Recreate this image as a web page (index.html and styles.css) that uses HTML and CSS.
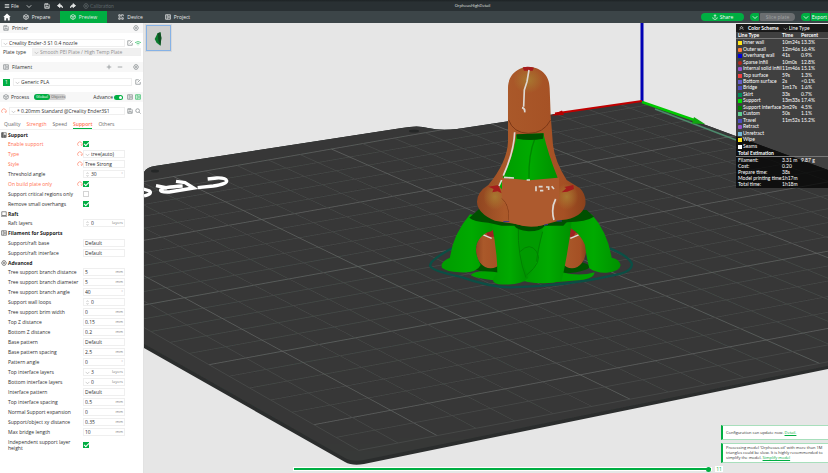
FILE: index.html
```html
<!DOCTYPE html>
<html lang="en">
<head>
<meta charset="utf-8">
<title>OrpheusHighDetail</title>
<link rel="stylesheet" href="styles.css">
</head>
<body>
<svg class="defs" aria-hidden="true">
  <symbol id="chev" viewBox="0 0 8 8"><path d="M1 3l3 3 3-3"/></symbol>
  <symbol id="reset" viewBox="0 0 8 8"><path d="M2 6.5A3 3 0 1 1 6.5 5.500M5 5l1.500 1L8 4.500"/></symbol>
  <symbol id="edit" viewBox="0 0 8 8"><path d="M5 1H1v6h6V4M3.500 4.500L7 1"/></symbol>
  <symbol id="gear" viewBox="0 0 8 8"><path d="M2.500 1h3L7.300 4 5.500 7h-3L.7 4z"/><circle cx="4" cy="4" r="1.200"/></symbol>
  <symbol id="spin" viewBox="0 0 8 8"><path d="M2.500 3L4 1l1.500 2M2.500 5L4 7l1.500-2"/></symbol>
  <symbol id="cube" viewBox="0 0 8 8"><path d="M4 .7L7 2.300v3.400L4 7.300 1 5.700V2.300zM1 2.300L4 4l3-1.700M4 4v3"/></symbol>
  <symbol id="save" viewBox="0 0 8 8"><path d="M1 1h4.500L7 2.500V7H1zM2.500 7V4.500h3V7M2.500 1v1.500h2V1"/></symbol>
  <symbol id="list" viewBox="0 0 8 8"><path d="M.8 1h6.400v6H.8zM3 1v6M4 3h2.500M4 5h2.500"/></symbol>
</svg>
<header class="titlebar">
  <button class="tb"><svg class="i" viewBox="0 0 8 8"><path d="M1 2h6M1 4h6M1 6h6"/></svg>File</button>
  <button class="tb" aria-label="More"><svg class="i"><use href="#chev"/></svg></button>
  <button class="tb save" aria-label="Save"><svg class="i"><use href="#save"/></svg></button>
  <button class="tb" aria-label="Undo"><svg class="i" viewBox="0 0 8 8"><path class="solid" d="M.5 3.500L4 .8v1.700c2 .1 3.400 1.500 3.500 4C6.500 5 5.500 4.600 4 4.600v1.600z"/></svg></button>
  <button class="tb" aria-label="Redo"><svg class="i" viewBox="0 0 8 8"><path class="solid" d="M7.500 3.500L4 .8v1.700C2 2.600.6 4 .5 6.500 1.500 5 2.500 4.600 4 4.600v1.600z"/></svg></button>
  <button class="tb dim" disabled><svg class="i"><use href="#gear"/></svg>Calibration</button>
  <h1>OrpheusHighDetail</h1>
</header>
<nav class="tabbar">
  <a class="home" href="#home" aria-label="Home"><svg viewBox="0 0 8 8"><path d="M4 .5L.3 4h1v3.500h1.900V5.200h1.600v2.300h1.900V4h1z"/></svg></a>
  <a href="#prepare"><svg class="i"><use href="#cube"/></svg>Prepare</a>
  <a class="on" href="#preview"><svg class="i"><use href="#cube"/></svg>Preview</a>
  <a href="#device"><svg class="i" viewBox="0 0 8 8"><path d="M1 1h2v2H1zM1 5h2v2H1zM5 5h2v2H5zM4.500 1h2.500v2M4.500 3.500V1"/></svg>Device</a>
  <a href="#project"><svg class="i"><use href="#list"/></svg>Project</a>
  <div class="actions">
    <button class="pill share"><svg class="i" viewBox="0 0 8 8"><path d="M4 5V1M2.500 2.500L4 1l1.500 1.500M1 4.500C1 8 7 8 7 4.500"/></svg>Share</button>
    <div class="split"><button class="pill drop" aria-label="Slice options"><svg class="i"><use href="#chev"/></svg></button><button class="pill slice" disabled>Slice plate</button></div>
    <div class="split"><button class="pill drop" aria-label="Export options"><svg class="i"><use href="#chev"/></svg></button><button class="pill export">Export</button></div>
  </div>
</nav>
<main>
<aside>
  <section>
    <h2 class="bar"><svg class="i"><use href="#save"/></svg><span>Printer</span><svg class="i end"><use href="#gear"/></svg></h2>
    <div class="line printer"><label class="box"><svg class="i"><use href="#chev"/></svg><select aria-label="Printer"><option>Creality Ender-3 S1 0.4 nozzle</option></select></label><svg class="i"><use href="#edit"/></svg><svg class="i green" viewBox="0 0 8 8"><path d="M0 3.500q4-3 8 0M2 5q2-1.500 4 0M3.500 6.500h1"/></svg></div>
    <div class="line plate"><label for="plate">Plate type</label><div class="box grey"><svg class="i"><use href="#chev"/></svg><select id="plate" disabled><option>Smooth PEI Plate / High Temp Plate</option></select></div></div>
  </section>
  <section>
    <h2 class="bar"><svg class="i"><use href="#list"/></svg><span>Filament</span><svg class="i end" viewBox="0 0 8 8"><path d="M1 4h6M4 1v6"/></svg><svg class="i mid" viewBox="0 0 8 8"><path d="M1 4h6"/></svg><svg class="i"><use href="#gear"/></svg></h2>
    <div class="line filament"><b class="num">1</b><label class="box"><svg class="i"><use href="#chev"/></svg><select aria-label="Filament"><option>Generic PLA</option></select></label><svg class="i"><use href="#edit"/></svg></div>
  </section>
  <section>
    <h2 class="bar process"><svg class="i"><use href="#cube"/></svg><span>Process</span><span class="toggle"><button class="on">Global</button><button>Objects</button></span><label class="adv" for="adv">Advance</label><input class="switch" id="adv" type="checkbox" checked><svg class="i"><use href="#list"/></svg><svg class="i green"><use href="#list"/></svg></h2>
    <div class="line preset"><svg class="i red"><use href="#reset"/></svg><label class="box"><svg class="i"><use href="#chev"/></svg><select aria-label="Process preset"><option>* 0.20mm Standard @Creality Ender3S1</option></select></label><svg class="i"><use href="#save"/></svg><svg class="i" viewBox="0 0 8 8"><circle cx="3.500" cy="3.500" r="2.500"/><path d="M5.500 5.500l2 2"/></svg></div>
  </section>
  <nav class="subtabs"><a href="#quality">Quality</a><a class="red" href="#strength">Strength</a><a href="#speed">Speed</a><a class="red on" href="#support">Support</a><a href="#others">Others</a></nav>
  <form>
    <h3><svg class="i" viewBox="0 0 8 8"><path d="M1 1h6v6H1z"/><path class="solid" d="M1 1h2v6H1zM4 4h2v3H4z"/></svg>Support</h3>
    <div class="row red"><label for="f1">Enable support</label><svg class="i"><use href="#reset"/></svg><input id="f1" type="checkbox" checked></div>
    <div class="row red"><label for="f2">Type</label><svg class="i"><use href="#reset"/></svg><div class="box"><svg class="i"><use href="#chev"/></svg><select id="f2"><option>tree(auto)</option></select></div></div>
    <div class="row red"><label for="f3">Style</label><svg class="i"><use href="#reset"/></svg><div class="box"><select id="f3"><option>Tree Strong</option></select></div></div>
    <div class="row"><label for="f4">Threshold angle</label><div class="box"><svg class="i"><use href="#spin"/></svg><input id="f4" value="30"><i>°</i></div></div>
    <div class="row red"><label for="f5">On build plate only</label><svg class="i"><use href="#reset"/></svg><input id="f5" type="checkbox" checked></div>
    <div class="row"><label for="f6">Support critical regions only</label><input id="f6" type="checkbox"></div>
    <div class="row"><label for="f7">Remove small overhangs</label><input id="f7" type="checkbox" checked></div>
    <h3><svg class="i" viewBox="0 0 8 8"><path d="M1 1h6v5H1zM0 7h8"/></svg>Raft</h3>
    <div class="row"><label for="f8">Raft layers</label><div class="box"><svg class="i"><use href="#spin"/></svg><input id="f8" value="0"><i>layers</i></div></div>
    <h3 class="last"><svg class="i"><use href="#list"/></svg>Filament for Supports</h3>
    <div class="row"><label for="f9">Support/raft base</label><div class="box"><select id="f9"><option>Default</option></select></div></div>
    <div class="row"><label for="f10">Support/raft interface</label><div class="box"><select id="f10"><option>Default</option></select></div></div>
    <h3><svg class="i"><use href="#gear"/></svg>Advanced</h3>
    <div class="row"><label for="g1">Tree support branch distance</label><div class="box"><input id="g1" value="5"><i>mm</i></div></div>
    <div class="row"><label for="g2">Tree support branch diameter</label><div class="box"><input id="g2" value="5"><i>mm</i></div></div>
    <div class="row"><label for="g3">Tree support branch angle</label><div class="box"><input id="g3" value="40"><i>°</i></div></div>
    <div class="row"><label for="g4">Support wall loops</label><div class="box"><svg class="i"><use href="#spin"/></svg><input id="g4" value="0"></div></div>
    <div class="row"><label for="g5">Tree support brim width</label><div class="box"><input id="g5" value="0"><i>mm</i></div></div>
    <div class="row"><label for="g6">Top Z distance</label><div class="box"><input id="g6" value="0.15"><i>mm</i></div></div>
    <div class="row"><label for="g7">Bottom Z distance</label><div class="box"><input id="g7" value="0.2"><i>mm</i></div></div>
    <div class="row"><label for="g8">Base pattern</label><div class="box"><select id="g8"><option>Default</option></select></div></div>
    <div class="row"><label for="g9">Base pattern spacing</label><div class="box"><input id="g9" value="2.5"><i>mm</i></div></div>
    <div class="row"><label for="g10">Pattern angle</label><div class="box"><input id="g10" value="0"><i>°</i></div></div>
    <div class="row"><label for="g11">Top interface layers</label><div class="box"><svg class="i"><use href="#chev"/></svg><input id="g11" value="3"><i>layers</i></div></div>
    <div class="row"><label for="g12">Bottom interface layers</label><div class="box"><svg class="i"><use href="#chev"/></svg><input id="g12" value="0"><i>layers</i></div></div>
    <div class="row"><label for="g13">Interface pattern</label><div class="box"><select id="g13"><option>Default</option></select></div></div>
    <div class="row"><label for="g14">Top interface spacing</label><div class="box"><input id="g14" value="0.5"><i>mm</i></div></div>
    <div class="row"><label for="g15">Normal Support expansion</label><div class="box"><input id="g15" value="0"><i>mm</i></div></div>
    <div class="row"><label for="g16">Support/object xy distance</label><div class="box"><input id="g16" value="0.35"><i>mm</i></div></div>
    <div class="row"><label for="g17">Max bridge length</label><div class="box"><input id="g17" value="10"><i>mm</i></div></div>
    <div class="row tall"><label for="g18">Independent support layer height</label><input id="g18" type="checkbox" checked></div>
  </form>
</aside>
<div class="view">
  <svg class="scene" viewBox="144 23 684 450" preserveAspectRatio="xMinYMin slice" role="img" aria-label="Sliced model on the build plate">
    <defs>
      <linearGradient id="body" x1="0" x2="1"><stop offset="0" stop-color="#8f4520"/><stop offset=".25" stop-color="#aa592a"/><stop offset=".8" stop-color="#a55024"/><stop offset="1" stop-color="#8a411c"/></linearGradient>
      <linearGradient id="leg" x1="0" x2="1"><stop offset="0" stop-color="#009c00"/><stop offset=".5" stop-color="#00aa00"/><stop offset="1" stop-color="#009000"/></linearGradient>
      <radialGradient id="glow"><stop offset="0" stop-color="#a87830"/><stop offset="1" stop-color="#a87830" stop-opacity="0"/></radialGradient>
      <clipPath id="plate-top"><path d="M144 172Q147 167 155 166L402 128Q418 125 428 128Q440 131 457 129L641 101L828 170V366L364 460Q352 462 345 458L144 344z"/></clipPath>
    </defs>
    <path fill="#2b2d2d" d="M144 172Q147 167 155 166L402 128Q418 125 428 128Q440 131 457 129L641 101L828 170V369L364 464Q352 466 345 462L144 348z"/>
    <path fill="#373938" d="M144 172Q147 167 155 166L402 128Q418 125 428 128Q440 131 457 129L641 101L828 170V366L364 460Q352 462 345 458L144 344z"/>
    <g id="grid" clip-path="url(#plate-top)"></g>
    <g fill="#252727"><ellipse cx="155" cy="171" rx="4" ry="1.500"/><ellipse cx="414" cy="131" rx="5" ry="1.500"/></g>
    <g transform="translate(140 120) scale(.3333)" fill="none" stroke="#fff" stroke-width="10">
      <path d="M173 203L220 198Q262 192 260 182Q257 173 230 174L203 177"/>
      <path d="M108 184L135 188L161 204L88 216Q54 217 64 207Q70 202 128 198M82 204L48 197"/>
      <path d="M10 207L27 212Q40 221 12 228"/>
    </g>
    <path d="M642 23V102" stroke="#0000b4" stroke-width="3"/>
    <path d="M642 101L555 113.500" stroke="#c00000" stroke-width="2"/><path fill="#b40000" d="M551 115.500l11-5 2 4.500z"/>
    <path d="M655 109L736 140" stroke="#4d8a6c" stroke-width="1.500"/>
    <path d="M642 102L697 121" stroke="#00c800" stroke-width="2.500"/><path fill="#0fa80f" d="M694 117l11 7-13-.5z"/>
    <g transform="translate(420 55) scale(.3333)">
      <path fill="none" stroke="#0b4f45" stroke-width="7" d="M96 580Q30 615 30 632Q36 648 120 665Q210 697 270 697Q440 695 600 657Q640 645 635 625Q625 603 570 580"/>
      <ellipse cx="333" cy="635" rx="175" ry="26" fill="#005200"/>
      <path fill="#00a300" d="M152 660Q170 640 250 655L300 665 425 652Q480 665 524 652Q522 670 490 674Q440 678 420 680L250 678Q170 672 152 660z"/>
      <ellipse cx="212" cy="585" rx="44" ry="55" fill="url(#body)"/><ellipse cx="456" cy="585" rx="42" ry="55" fill="url(#body)"/>
      <path fill="#9e2222" d="M190 520h35v25h-20zM445 520h30l-15 25h-15z"/><path fill="none" stroke="#ddd" stroke-width="4" d="M190 540l25 10M476 540l-25 10"/>
      <path fill="url(#leg)" d="M150 478L245 495 215 528Q185 535 172 562Q160 590 182 630Q170 655 120 652Q80 650 66 638Q60 620 90 608Q98 540 150 478z"/>
      <path fill="url(#leg)" d="M515 478L440 500 455 522Q480 535 495 570Q500 610 508 640Q530 655 560 653Q600 650 602 630Q598 612 575 608Q562 530 515 478z"/>
      <path fill="#009a00" d="M270 505h130v165H270z"/>
      <path fill="url(#leg)" d="M215 505L295 510Q300 600 325 670Q300 693 235 688Q205 680 232 655Q232 590 215 505z"/>
      <path fill="url(#leg)" d="M370 510L455 500Q445 590 425 678Q380 690 318 680Q345 640 355 600z"/>
      <path d="M300 590q30-30 50 0t-30 70M295 515Q292 600 318 668M368 530Q352 590 350 620" fill="none" stroke="#008200" stroke-width="3"/>
      <path fill="#005000" d="M148 488L180 460 500 465 522 485Q500 500 440 502L430 512 375 512Q360 530 325 529Q290 525 283 512L245 512 205 503Q160 500 148 488z"/>
      <path fill="url(#body)" d="M264 100C264 15 389 15 389 100L392 180L399 270Q405 320 440 375L480 400Q500 420 496 450Q485 490 425 495L370 510Q330 520 290 508L225 497Q172 475 171 440Q172 410 205 390Q262 320 264 260z"/>
      <ellipse cx="325" cy="75" rx="45" ry="40" fill="url(#glow)"/><ellipse cx="225" cy="425" rx="35" ry="40" fill="url(#glow)"/><ellipse cx="440" cy="425" rx="35" ry="40" fill="url(#glow)"/>
      <path fill="none" stroke="#7c3817" stroke-width="3" d="M246 430Q270 450 267 496M408 430Q390 460 402 495M266 195Q280 234 325 235T392 195"/>
      <path fill="#ad5a2e" d="M246 366L325 376 417 368 418 430Q396 460 404 497L370 510Q330 520 290 508L266 500Q272 450 246 430z"/>
      <path fill="url(#leg)" d="M289 240L370 235Q385 300 413 368L328 376 248 368Q282 300 289 240z"/><path fill="none" stroke="#008600" stroke-width="4" d="M345 250Q325 300 327 370"/>
      <path fill="#005200" d="M289 238l82-3-2 16q-40 8-78 0z"/>
      <path fill="#a51c1c" d="M308 37q17-4 34 1l-4 9h-26zM205 395l30-5 10 25-12-6-16 3 4-10zM425 412l14-12-6-4 27-6 2 12-20 8z"/><path fill="#0a0" d="M240 378h6v25l-7-8z"/>
      <path fill="none" stroke="#ddd8d2" stroke-width="5" d="M327 45L321 80 313 105 311 155M306 158q10 2 8 14M284 232Q282 290 250 362M245 375l-8 18M407 432Q392 460 402 495M348 394v15M356 395l12 0M360 407h10M378 396h8v9M395 394l7 8M252 367l30 2M320 375h10"/>
      <path stroke="#333499" stroke-width="3" d="M250 500h18M372 511l12-3M410 498h16"/>
    </g>
  </svg>
  <button class="thumb" aria-label="Plate 1"><svg viewBox="0 0 24 24"><path fill="#0a7a2c" d="M8 13l3-6 3-1 1 6-1 8-4-3z"/><path fill="#114d22" d="M11 7l3-1 1 6-1 8-2-5z"/></svg></button>
  <section class="legend">
    <div class="scheme"><svg class="i" viewBox="0 0 8 8"><path d="M1 6l3-3 3 3M1 3.500l3-3 3 3"/></svg><label for="scheme">Color Scheme</label><div class="box"><svg class="i"><use href="#chev"/></svg><select id="scheme"><option>Line Type</option></select></div></div>
    <table class="types">
      <thead><tr><th>Line Type</th><th>Time</th><th>Percent</th></tr></thead>
      <tbody>
      <tr><td><s class="c1"></s>Inner wall</td><td>10m24s</td><td>13.3%</td></tr>
      <tr><td><s class="c2"></s>Outer wall</td><td>12m46s</td><td>16.4%</td></tr>
      <tr><td><s class="c3"></s>Overhang wall</td><td>41s</td><td>0.9%</td></tr>
      <tr><td><s class="c4"></s>Sparse infill</td><td>10m0s</td><td>12.8%</td></tr>
      <tr><td><s class="c5"></s>Internal solid infill</td><td>11m46s</td><td>15.1%</td></tr>
      <tr><td><s class="c6"></s>Top surface</td><td>59s</td><td>1.3%</td></tr>
      <tr><td><s class="c7"></s>Bottom surface</td><td>2s</td><td>&lt;0.1%</td></tr>
      <tr><td><s class="c8"></s>Bridge</td><td>1m17s</td><td>1.6%</td></tr>
      <tr><td><s class="c9"></s>Skirt</td><td>33s</td><td>0.7%</td></tr>
      <tr><td><s class="c10"></s>Support</td><td>13m33s</td><td>17.4%</td></tr>
      <tr><td><s class="c11"></s>Support interface</td><td>3m29s</td><td>4.5%</td></tr>
      <tr><td><s class="c12"></s>Custom</td><td>50s</td><td>1.1%</td></tr>
      <tr><td><s class="c8"></s>Travel</td><td>11m52s</td><td>15.2%</td></tr>
      <tr><td><s class="c5"></s>Retract</td><td></td><td></td></tr>
      <tr><td><s class="c13"></s>Unretract</td><td></td><td></td></tr>
      <tr><td><s class="c1"></s>Wipe</td><td></td><td></td></tr>
      <tr><td><s class="c14"></s>Seams</td><td></td><td></td></tr>
      </tbody>
    </table>
    <h3>Total Estimation</h3>
    <table class="totals"><tbody>
      <tr><td>Filament:</td><td>3.31 m</td><td>9.87 g</td></tr>
      <tr><td>Cost:</td><td>0.20</td><td></td></tr>
      <tr><td>Prepare time:</td><td>38s</td><td></td></tr>
      <tr><td>Model printing time:</td><td>1h17m</td><td></td></tr>
      <tr><td>Total time:</td><td>1h18m</td><td></td></tr>
    </tbody></table>
  </section>
  <div class="toasts">
    <p>Configuration can update now. <a href="#detail">Detail.</a></p>
    <p>Processing model 'Orpheous.stl' with more than 1M<br>triangles could be slow. It is highly recommended to<br>simplify the model. <a href="#simplify">Simplify model</a></p>
  </div>
  <div class="moves"><input type="range" min="0" max="11" value="11" aria-label="Move"><output>11</output></div>
</div>
</main>
<script src="grid.js"></script>
</body>
</html>
```
FILE: grid.js
```js
// Projects the 220 mm build plate grid (units of 50 mm) into scene coordinates.
const project = (u, v) => {
  const w = 1 - 0.0442 * u - 0.008 * v;
  return [(80.5 * u - 167.5 * v + 261.7) / w, (35.2 * u + 27.5 * v + 219.5) / w];
};
const grid = document.getElementById('grid');
const line = (a, b, major) => {
  const p = document.createElementNS('http://www.w3.org/2000/svg', 'path');
  p.setAttribute('d', `M${a.map(n => n.toFixed(1))}L${b.map(n => n.toFixed(1))}`);
  p.setAttribute('class', major ? 'major' : 'minor');
  grid.append(p);
};
for (let i = 0; i <= 22; i++) {
  const u = -1 + i / 5;
  const v = -3 + i / 5;
  line(project(u, -3), project(u, 1.4), i % 5 === 0);
  line(project(-1, v), project(3.4, v), i % 5 === 0);
}
```
FILE: styles.css
```css
* { box-sizing: border-box; }
html, body { height: 100%; }
body { margin: 0; display: flex; flex-direction: column; overflow: hidden; font: 5px/6px "Open Sans", "Noto Sans", sans-serif; color: #303030; background: #fff; }
button, input, select { font: inherit; color: inherit; background: none; border: 0; padding: 0; margin: 0; min-width: 0; appearance: none; }
select:disabled { opacity: 1; }
a { color: inherit; text-decoration: none; }
h1, h2, h3, p { margin: 0; font: inherit; }
.defs { display: none; }
.i { width: 6px; height: 6px; flex: none; fill: none; stroke: currentColor; stroke-width: 1; }
.solid { fill: currentColor; }
.green { color: #00ae42; }
.red { color: #ff6f4f; }

.titlebar { position: relative; height: 11px; flex: none; display: flex; align-items: center; padding-left: 4px; gap: 7px; background: linear-gradient(#1d2224, #293033 20%); color: #e4e6e6; }
.tb { display: flex; align-items: center; gap: 1px; }
.tb.save { margin-left: 5px; }
.tb.dim { color: #5c6467; font-family: Lato, sans-serif; }
.titlebar h1 { position: absolute; inset: 3px 0 auto; margin-left: 117px; text-align: center; pointer-events: none; font-size: 4px; }

.tabbar { height: 12px; flex: none; display: flex; background: #3c4548; color: #e8eaea; }
.tabbar > a { width: 47px; display: flex; align-items: center; justify-content: center; gap: 3px; }
.tabbar > a.home { width: 13px; }
.home svg { width: 8px; height: 8px; fill: #fff; }
.tabbar > a.on { background: #00ae42; }
.actions { flex: 1; display: flex; justify-content: flex-end; align-items: center; gap: 6px; color: #fff; }
.pill { height: 8px; border-radius: 4px; background: #00ae42; display: flex; align-items: center; justify-content: center; gap: 2px; }
.share { width: 43px; }
.split { display: flex; gap: 1px; }
.drop { width: 9px; border-radius: 4px 1px 1px 4px; }
.slice { width: 35px; background: #6b6e70; color: #a2a5a6; border-radius: 1px 4px 4px 1px; }
.export { width: 17px; border-radius: 1px 0 0 1px; }

main { flex: 1; min-height: 0; display: grid; grid-template-columns: 144px 1fr; }
aside { overflow: hidden; background: #fff; border-right: 1px solid #e2e2e2; }
.bar { display: flex; align-items: center; height: 10px; padding: 0 4px 0 3px; background: #f7f7f7; gap: 3px; }
.bar.process { padding-right: 2px; gap: 2px; }
.end { margin-left: auto; }
.bar .mid { margin: 0 7px 0 2px; }
.line { display: flex; align-items: center; gap: 4px; padding: 0 2px 0 1px; height: 10px; }
.line .i, .bar .i { color: #8a8f91; }
.line .green, .bar .green { color: #35bd68; }
.line .red, .row .i { color: #ff8f76; }
.box { flex: 1; min-width: 0; display: flex; align-items: center; height: 8px; border: 1px solid #efefef; padding: 0 1px; gap: 1px; background: #fff; }
.box .i, .row .box .i { width: 5px; height: 5px; color: #b0b0b0; }
.box select, .box input { flex: 1; width: 10px; height: 6px; }
.grey { background: #f0f0f0; color: #909090; }
.line.printer { margin-top: 5px; gap: 2px; }
.line.plate { height: 8px; padding-left: 3px; margin-bottom: 6px; gap: 6px; }
.line.filament { margin: 5px 0; padding-left: 3px; gap: 3px; }
.num { width: 7px; height: 7px; background: #00ae42; color: #fff; text-align: center; font-weight: 400; line-height: 7px; }
.toggle { display: flex; height: 6px; margin-left: 3px; background: #cfcfcf; border-radius: 3px; font-size: 4px; color: #666; }
.toggle button { padding: 0 1px; width: 16px; border-radius: 3px; }
.toggle .on { background: #00ae42; color: #fff; }
.adv { margin-left: auto; }
.switch { position: relative; width: 9px; height: 5px; border-radius: 3px; background: #00ae42; margin: 0 2px 0 -1px; }
.switch::after { content: ""; position: absolute; right: 1px; top: 1px; width: 3px; height: 3px; border-radius: 50%; background: #fff; }
.line.preset { margin-top: 4px; gap: 2px; }
.subtabs { display: flex; gap: 6px; height: 12px; margin: 2px 0 0; padding: 3px 0 0 4px; color: #6b6b6b; border-bottom: 1px solid #f1f1f1; }
.subtabs .red { color: #ff6f4f; }
.subtabs .on { font-weight: 600; border-bottom: 1px solid #00ae42; }
form h3 { display: flex; align-items: center; gap: 1px; height: 9px; padding-left: 1px; font-weight: 700; color: #222; }
form h3.last { height: 10px; }
form h3 .i { color: #666; }
.row { display: grid; grid-template-columns: 69px 6px 42px; align-items: center; height: 10px; padding-left: 8px; }
.row label { grid-column: 1; white-space: nowrap; }
.row > .box, .row > input { grid-column: 3; }
.row .box select, .row .box input { color: #303030; }
.row i { font-style: normal; font-size: 4px; color: #808080; }
.row.tall { height: 15px; }
.row.tall label { white-space: normal; }
.row > [type=checkbox] { position: relative; width: 6px; height: 6px; border: 1px solid #d4d4d4; }
.row > [type=checkbox]:checked { background: #00ae42; border-color: #00ae42; }
.row > [type=checkbox]:checked::after { content: ""; position: absolute; left: 0; top: 0; width: 4px; height: 2px; border: solid #fff; border-width: 0 0 1px 1px; transform: rotate(-45deg); }

.view { position: relative; overflow: hidden; background: #e6e6e6; }
.scene { position: absolute; inset: 0; width: 100%; height: 100%; }
.major { stroke: #626463; stroke-width: 1; opacity: .8; }
.minor { stroke: #4a4c4b; stroke-width: 1; opacity: .8; }
.thumb { position: absolute; left: 2px; top: 2px; width: 25px; height: 26px; background: #cfcfcf; border: 1px solid #86b2e6; outline: 1px solid #d8d8d8; }
.thumb svg { width: 23px; height: 24px; display: block; }
.legend { position: absolute; top: 1px; right: 0; width: 92px; color: #fff; background: rgba(0, 0, 0, .72); padding-bottom: 1px; font-family: Lato, sans-serif; }
.scheme { display: flex; align-items: center; height: 8px; padding-left: 3px; gap: 4px; background: #1a1a1a; font-weight: 700; }
.scheme .i { width: 5px; height: 5px; }
.legend .box { border: 0; padding: 0; background: none; font-weight: 400; }
.legend table { border-collapse: collapse; table-layout: fixed; width: 100%; }
.legend td, .legend th { padding: 0; text-align: left; white-space: nowrap; line-height: 6px; }
.legend td:nth-child(1), .legend th:nth-child(1) { width: 46px; padding-left: 2px; }
.legend td:nth-child(2), .legend th:nth-child(2) { width: 19px; }
.types { height: 117px; }
.types th { border-bottom: 1px solid #777; }
s { display: inline-block; width: 4px; height: 4px; margin-right: 1px; vertical-align: -1px; }
.c1 { background: #ffe61a; } .c2 { background: #ff7d38; border-radius: 1px; } .c3 { background: #0000d8; } .c4 { background: #b4261a; border-radius: 2px; }
.c5 { background: #9655cc; border-radius: 1px; } .c6 { background: #f04040; } .c7 { background: #665cc7; } .c8 { background: #4d4dbb; }
.c9 { background: #008a5a; } .c10 { background: #00e000; } .c11 { background: #008000; } .c12 { background: #5ecf90; } .c13 { background: #71b8d8; } .c14 { background: #fff; }
.legend h3 { height: 8px; padding: 1px 2px 0; font-weight: 700; border-bottom: 1px solid #777; }
.toasts { position: absolute; right: -14px; bottom: 10px; width: 121px; display: grid; gap: 3px; font-size: 4px; }
.toasts p { background: #fff; border: 1px solid #a8dfbc; border-left: 2px solid #00ae42; padding: 1px 3px 2px; line-height: 5px; white-space: nowrap; }
.toasts p:first-child { padding: 4px 3px; }
.toasts a { color: #00ae42; text-decoration: underline; }
.moves { position: absolute; left: 149px; right: 105px; bottom: 0; height: 8px; display: flex; align-items: center; gap: 3px; }
.moves input { flex: 1; height: 4px; background: #00ae42; border: 1px solid #fff; }
.moves input::-webkit-slider-thumb { appearance: none; width: 5px; height: 5px; border-radius: 50%; background: #00ae42; }
.moves output { width: 8px; background: #fff; color: #00ae42; text-align: center; }
```
